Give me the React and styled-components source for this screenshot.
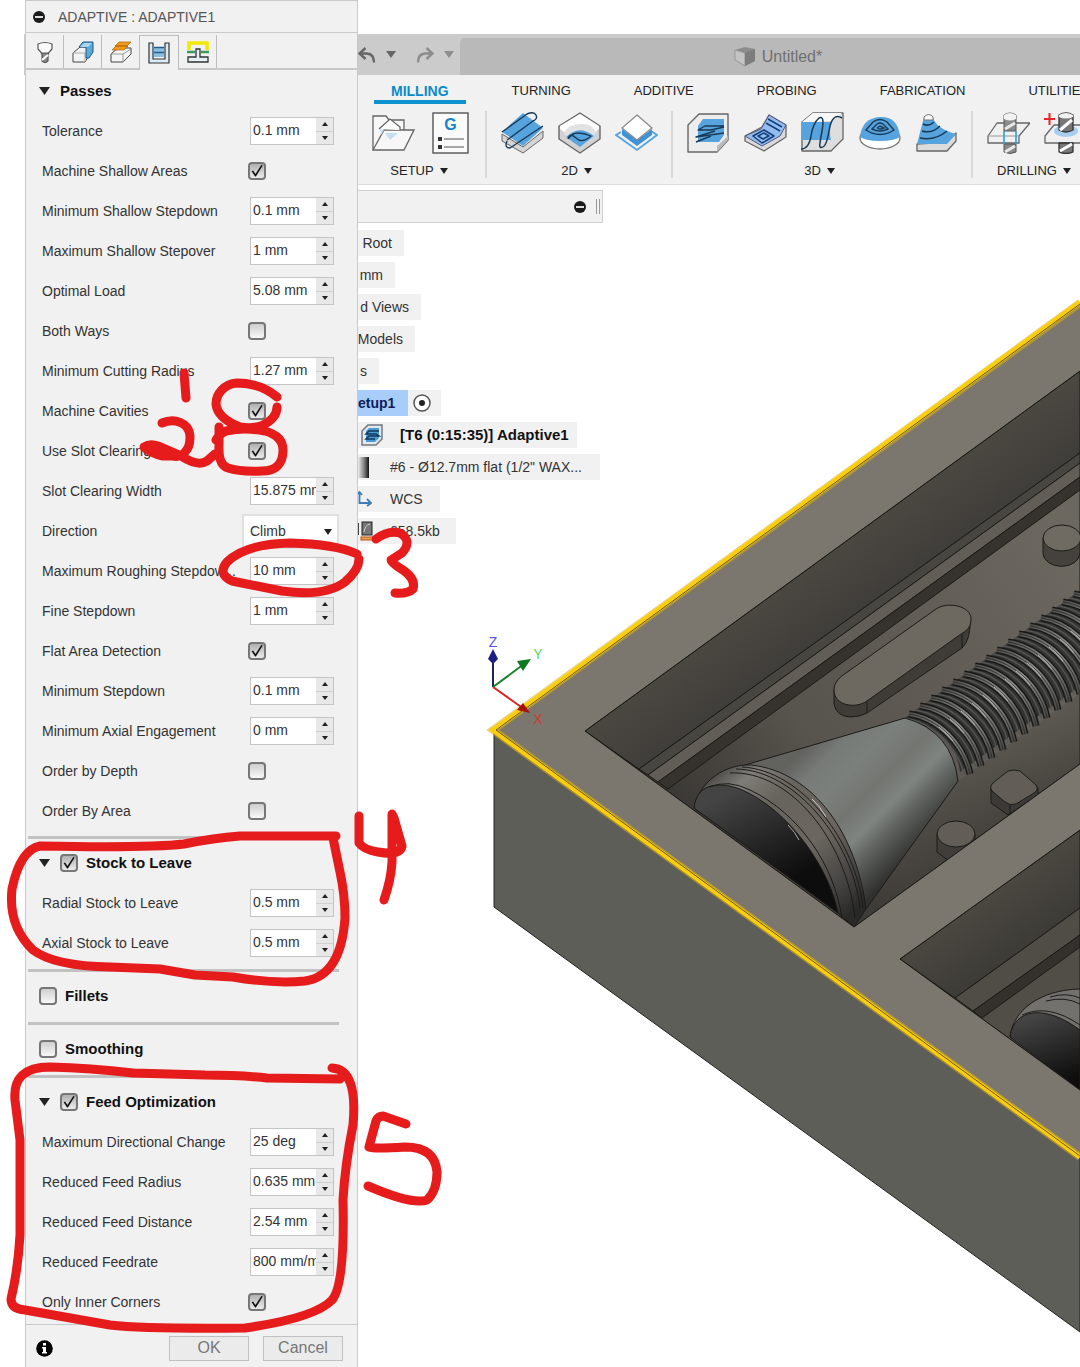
import React from "react";
import styled, { createGlobalStyle, css } from "styled-components";

const GlobalStyle = createGlobalStyle`
  * { box-sizing: border-box; }
  body {
    margin: 0;
    background: #fff;
    color: #333;
    font-family: "Liberation Sans", Arial, sans-serif;
    font-size: 14px;
    line-height: 16px;
  }
  button, input, select { font: inherit; color: inherit; }
  svg { display: block; flex: none; }
`;

/* ---------- page frame ---------- */

const Page = styled.div`
  position: relative;
  display: flex;
  min-height: 100vh;
  overflow: hidden;
`;

const WindowEdge = styled.div`
  flex: none;
  width: 1px;
  height: 41px;
  margin: 34px 0 0 24px;
  background: #cbcbcb;
`;

const Markup = styled.svg`
  position: absolute;
  top: 0;
  left: 0;
  pointer-events: none;
`;

/* ---------- settings panel ---------- */

const Panel = styled.aside`
  flex: none;
  display: flex;
  flex-direction: column;
  width: 333px;
  background: #f1f1f1;
  border: 1px solid #c9c9c9;
  border-bottom: 0;
`;

const PanelTitle = styled.header`
  display: flex;
  align-items: center;
  gap: 13px;
  height: 32px;
  padding: 0 7px;
  border-bottom: 1px solid #c9c9c9;
  color: #555;
`;

const PanelTabs = styled.nav`
  display: flex;
  align-items: flex-end;
  height: 37px;
  border-bottom: 2px solid #c8c8c8;
`;

const PanelTab = styled.button`
  display: flex;
  align-items: center;
  justify-content: center;
  width: 38px;
  height: 33px;
  padding: 0;
  border: 0;
  border-right: 1px solid #bdbdbd;
  background: transparent;
  ${(p) =>
    p.$active &&
    css`
      width: 40px;
      height: 35px;
      margin-bottom: -2px;
      border: 1px solid #bdbdbd;
      border-width: 1px 1px 0 1px;
      margin-left: -1px;
      background: #f1f1f1;
    `}
`;

const PanelBody = styled.div`
  flex: 1;
  padding: 1px 18px 1px 2px;
`;

const Section = styled.section`
  padding-bottom: 6px;
  & + & {
    border-top: 3px solid #c2c2c2;
    padding-top: 4px;
  }
  &:first-child { padding-bottom: 5px; }
  &:last-child { padding-bottom: 0; }
`;

const SectionHead = styled.div`
  display: flex;
  align-items: center;
  gap: 8px;
  height: 40px;
  padding-left: 11px;
  color: #111;
  font-size: 15px;
  font-weight: bold;
`;

const FoldButton = styled.button`
  display: flex;
  padding: 0;
  border: 0;
  margin-right: 2px;
  background: transparent;
`;

const Row = styled.div`
  display: grid;
  grid-template-columns: 200px 1fr;
  align-items: center;
  height: 40px;
  padding-left: 14px;
  & > label { white-space: nowrap; }
`;

const Check = styled.input.attrs({ type: "checkbox" })`
  appearance: none;
  flex: none;
  width: 18px;
  height: 18px;
  margin: 0 0 0 ${(p) => (p.$inRow ? "6px" : "0")};
  border: 2px solid #777;
  border-radius: 4px;
  background: linear-gradient(#cfcfcf, #f8f8f8);
  &:checked { background: linear-gradient(#b0b0b0, #ececec); }
  &:checked::after {
    content: "";
    display: block;
    width: 14px;
    height: 14px;
    background: #111;
    clip-path: polygon(12% 52%, 22% 46%, 39% 72%, 82% 6%, 90% 12%, 42% 90%, 36% 90%);
  }
`;

const SpinBox = styled.div`
  display: flex;
  width: 84px;
  height: 28px;
  margin-left: 8px;
  border: 1px solid #c4c4c4;
  background: #fff;
`;

const SpinInput = styled.input`
  width: 65px;
  padding: 0 0 2px 2px;
  border: 0;
  background: #fff;
`;

const SpinButtons = styled.div`
  display: grid;
  flex: 1;
  gap: 1px;
  background: #cfcfcf;
  & > button {
    display: flex;
    align-items: center;
    justify-content: center;
    padding: 0;
    border: 0;
    background: #e8e8e8;
  }
`;

const SelectBox = styled.div`
  position: relative;
  width: 97px;
  & > select {
    appearance: none;
    width: 100%;
    height: 35px;
    padding: 0 6px;
    border: 2px solid #e0e0e0;
    border-radius: 0;
    background: #fff;
  }
  & > svg {
    position: absolute;
    right: 7px;
    top: 15px;
    pointer-events: none;
  }
`;

const PanelFooter = styled.footer`
  display: flex;
  align-items: center;
  gap: 14px;
  height: 43px;
  padding: 5px 14px 1px 10px;
  border-top: 1px solid #c9c9c9;
`;

const InfoButton = styled.button`
  display: flex;
  margin-right: auto;
  padding: 0;
  border: 0;
  background: transparent;
`;

const FooterButton = styled.button`
  width: 80px;
  height: 25px;
  padding: 0;
  border: 1px solid #c0c0c0;
  background: #ebebeb;
  color: #777;
  font-size: 16px;
`;

/* ---------- workspace ---------- */

const Workspace = styled.div`
  flex: 1;
  min-width: 0;
  display: flex;
  flex-direction: column;
  padding-top: 34px;
`;

const TitleBar = styled.header`
  display: flex;
  height: 41px;
  padding-top: 4px;
  background: #cbcbcb;
`;

const History = styled.div`
  display: flex;
  align-items: center;
  gap: 10px;
  width: 102px;
  padding-bottom: 4px;
  & > button {
    display: flex;
    padding: 0;
    border: 0;
    background: transparent;
  }
`;

const DocumentTab = styled.div`
  display: flex;
  flex: 1;
  align-items: center;
  justify-content: center;
  gap: 6px;
  padding-left: 16px;
  border-top-left-radius: 5px;
  background: #b9b9b9;
  color: #707070;
  font-size: 16px;
`;

const Ribbon = styled.div`
  overflow: hidden;
  height: 110px;
  border-bottom: 1px solid #dcdcdc;
  background: #f1f1f1;
  white-space: nowrap;
`;

const RibbonTabs = styled.nav`
  display: flex;
  gap: 29px;
  padding-left: 16px;
`;

const RibbonTab = styled.button`
  flex: none;
  height: 29px;
  padding: 7px 17px 0;
  border: 0;
  border-bottom: 4px solid ${(p) => (p.$active ? "#0d93cf" : "transparent")};
  background: transparent;
  color: ${(p) => (p.$active ? "#0a8bc9" : "#222")};
  font-size: ${(p) => (p.$active ? "14px" : "13px")};
  font-weight: ${(p) => (p.$active ? "bold" : "normal")};
`;

const Groups = styled.div`
  display: flex;
  margin-top: 7px;
`;

const Group = styled.div`
  display: flex;
  flex: none;
  flex-direction: column;
  gap: 9px;
  height: 67px;
  padding: 0 13px 0 14px;
  border-right: 2px solid #d9d9d9;
`;

const Tools = styled.div`
  display: flex;
  gap: 14px;
  & > button {
    padding: 0;
    border: 0;
    background: transparent;
  }
`;

const GroupMenu = styled.button`
  display: flex;
  align-items: center;
  justify-content: center;
  gap: 6px;
  padding: 0 6px 0 0;
  border: 0;
  background: transparent;
  color: #222;
  font-size: 13px;
  line-height: 16px;
`;

const Viewport = styled.main`
  position: relative;
  flex: 1;
  padding-top: 5px;
`;

const Scene = styled.svg`
  position: absolute;
  inset: 0;
  width: 100%;
  height: 100%;
`;

const Browser = styled.div`
  position: relative;
`;

const BrowserHead = styled.div`
  display: flex;
  align-items: center;
  justify-content: flex-end;
  gap: 10px;
  width: 245px;
  height: 33px;
  padding-right: 2px;
  border: 1px solid #cfcfcf;
  border-left: 0;
  background: #f1f1f1;
`;

const Grip = styled.div`
  width: 4px;
  height: 15px;
  border: 1px solid #999;
  border-width: 0 1px;
`;

const Tree = styled.ul`
  display: grid;
  gap: 6px;
  margin: 7px 0 0;
  padding: 0;
  list-style: none;
`;

const Node = styled.li`
  display: flex;
  align-items: center;
  justify-content: ${(p) => (p.$clipped ? "flex-end" : "flex-start")};
  overflow: hidden;
  width: ${(p) => p.$width}px;
  height: 26px;
  padding-right: ${(p) => (p.$clipped ? "12px" : "0")};
  background: #f1f1f1;
  color: ${(p) => (p.$bold ? "#111" : "#333")};
  font-size: ${(p) => (p.$bold ? "15px" : "14px")};
  font-weight: ${(p) => (p.$bold ? "bold" : "normal")};
  white-space: nowrap;
`;

const NodeIcon = styled.span`
  flex: none;
  width: ${(p) => (p.$wide ? "42px" : "32px")};
`;

const Selected = styled.span`
  width: 50px;
  margin-right: 5px;
  background: #a9cdfb;
  color: #0b1f5c;
  font-weight: bold;
  line-height: 26px;
`;

/* ---------- small glyphs ---------- */

const Caret = ({ w = 8, h = 6, up, color = "#222" }) => (
  <svg width={w} height={h} viewBox="0 0 10 8" preserveAspectRatio="none">
    <path d={up ? "M0 8H10L5 0Z" : "M0 0H10L5 8Z"} fill={color} />
  </svg>
);

const MinusDot = ({ size = 12 }) => (
  <svg width={size} height={size} viewBox="0 0 12 12">
    <circle cx="6" cy="6" r="6" fill="#1b1b1b" />
    <rect x="2" y="5" width="8" height="2" fill="#ddd" />
  </svg>
);

const UndoIcon = ({ flip, color }) => (
  <svg width="18" height="16" viewBox="0 0 18 16" fill="none" stroke={color} strokeWidth="2.4">
    <g transform={flip ? "translate(18 0) scale(-1 1)" : undefined}>
      <path d="M7.5 1 1.5 6.5 7.5 12M2 6.5H9Q16 7 16 15.5" />
    </g>
  </svg>
);

const CubeIcon = () => (
  <svg width="22" height="21" viewBox="0 0 22 21">
    <path d="M1 4 11 1 21 3V15L11 20 1 14Z" fill="#8c8c8c" />
    <path d="M1 4 11 7V20L1 14Z" fill="#c4c4c4" stroke="#999" />
    <path d="M11 7 21 3V15L11 20Z" fill="#7d7d7d" />
  </svg>
);

const tabIcons = {
  Tool: (
    <g stroke="#555" strokeWidth="1.2" strokeLinejoin="round">
      <path d="M4 3Q11 0 18 3V8Q15 11 14 13H8Q7 11 4 8Z" fill="#fafafa" />
      <path d="M8 12H14V20L11 22 8 20Z" fill="#888" />
      <path d="M8 19 14 14" stroke="#fff" strokeWidth="2" />
    </g>
  ),
  Geometry: (
    <g strokeLinejoin="round">
      <path d="M1 12 8 6H15V13H18L13 21H1Z" fill="#f3f3f3" stroke="#444" />
      <path d="M1 12H13V21" stroke="#aaa" fill="none" />
      <path d="M7 6 11 1H21V11L17 17H14V6Z" fill="#5ea9dc" stroke="#1d5580" />
      <path d="M8 6 12 2H20L16 6Z" fill="#a9d6f2" />
    </g>
  ),
  Heights: (
    <g strokeLinejoin="round">
      <path d="M1 13 8 7H21V13L13 21H1Z" fill="#f5f5f5" stroke="#444" />
      <path d="M1 13H13V21M13 13 21 8" stroke="#999" fill="none" />
      <path d="M2 9 6 5H18L14 9ZM5 5 9 1H21L17 5Z" fill="#f39a1d" stroke="#a8640a" strokeWidth=".7" />
    </g>
  ),
  Passes: (
    <g>
      <path d="M1 1H5V17H17V1H21V21H1Z" fill="#dcebf5" stroke="#333" strokeWidth="1.2" />
      <path d="M6 5H16V15H6Z" fill="#8bbde0" />
      <path d="M6 5.5H16M6 10.5H16" stroke="#235f91" strokeWidth="1.5" />
    </g>
  ),
  Linking: (
    <g>
      <path d="M2 9V2H20V9" fill="none" stroke="#f3e800" strokeWidth="3.6" />
      <path d="M0 11H8M14 11H22" stroke="#3a9b5b" strokeWidth="2.5" />
      <path d="M1 16H9V8H13V16H21V21H1Z" fill="#e5f0f4" stroke="#333" strokeWidth="1.3" />
    </g>
  ),
};

/* ---------- ribbon icons, drawn on a 43 x 43 grid ---------- */

const B = "#56a3de";
const D = "#173a56";
const G = "#666";

const ribbonIcons = {
  "New Setup": (
    <g fill="none" stroke="#666" strokeWidth="1.3">
      <path d="M1 39V5H14L17 9H32V19M1 39 12 19H42L32 39Z" fill="#f7f7f7" />
      <path d="M7 18 18 8 28 16V19" fill="#fff" />
      <path d="M8 18 12 19 9 24ZM13 22H26L18 29Z" fill="#c5dff2" stroke="none" />
    </g>
  ),
  "NC Program": (
    <g>
      <rect x="4" y="2" width="35" height="40" fill="#fafafa" stroke="#555" strokeWidth="1.4" />
      <path d="M9 26h4v4H9zM9 34h4v4H9z" fill="#333" />
      <path d="M15 28H35M15 36H35" stroke="#555" />
      <text x="21.500" y="19" textAnchor="middle" fontSize="16" fontWeight="bold" fill="#1583cf">G</text>
    </g>
  ),
  "2D Adaptive": (
    <g strokeLinejoin="round">
      <path d="M1 23 22 36 42 20V27L22 42 1 30Z" fill="#d5d5d5" stroke={G} />
      <path d="M1 21 22 2 42 17 22 35Z" fill={B} />
      <path d="M1 21 26 3Q33 0 35 4T32 10L6 29M6 30Q3 37 9 37L42 15" fill="none" stroke={D} strokeWidth="1.4" />
    </g>
  ),
  "2D Pocket": (
    <g strokeLinejoin="round">
      <path d="M22 2 42 15V28L22 42 1 28V15Z" fill="#d2d2d2" stroke={G} strokeWidth="1.4" />
      <path d="M22 3 41 15 41 18 22 32 2 18V15Z" fill="#fff" />
      <path d="M6 23Q8 14 22 13T38 23L22 35Z" fill="#e2e2e2" />
      <path d="M8 26Q21 13 36 25L22 36Z" fill={B} />
      <path d="M10 28Q14 22 20 22T33 25Q24 33 18 27T10 28" fill="none" stroke={D} strokeWidth="1.3" />
    </g>
  ),
  "2D Contour": (
    <g>
      <path d="M6 21 1 24 22 39 42 24 36 20" fill="none" stroke={B} strokeWidth="1.8" />
      <path d="M7 18V24L22 35 37 24V18L22 29Z" fill="#3e93d6" />
      <path d="M22 4 37 17 22 29 7 17Z" fill="#fff" stroke="#888" strokeWidth="1.2" />
    </g>
  ),
  "Adaptive Clearing": (
    <g strokeLinejoin="round">
      <path d="M1 14 12 3H41V29L30 41H1Z" fill="#ededed" stroke={G} strokeWidth="1.4" />
      <path d="M30 41V35L41 25V29Z" fill="#bbb" />
      <path d="M11 15 16 8H37V24L32 31H11Z" fill={B} />
      <path d="M37 15H18L11 19H24L37 16M37 22 9 26 28 20M9 31 24 25" fill="none" stroke={D} strokeWidth="1.4" />
    </g>
  ),
  "Pocket Clearing": (
    <g strokeLinejoin="round">
      <path d="M1 25 18 16 25 4 42 14V26L20 40 1 30Z" fill="#dadada" stroke={G} strokeWidth="1.3" />
      <path d="M1 25 17 18 25 4 42 14 36 25 18 35Z" fill="#91bdf0" stroke="#557" />
      <path d="M24 8 38 16M22 12 36 20M9 25 20 19 30 25 18 32ZM14 25 20 22 25 25 19 28Z" fill="none" stroke="#153e7a" strokeWidth="1.5" />
    </g>
  ),
  Parallel: (
    <g strokeLinejoin="round">
      <path d="M1 40V11L12 2H42V28L30 40Z" fill="#dedede" stroke={G} strokeWidth="1.3" />
      <path d="M1 11 12 2H41L30 10Z" fill="#f7f7f7" />
      <path d="M1 11H30Q28 22 30 29H1Z" fill={B} />
      <path d="M0 38Q8 38 10 25T18 7Q24 4 21 20T19 36Q25 39 28 20T41 7" fill="none" stroke={D} strokeWidth="1.5" />
    </g>
  ),
  Spiral: (
    <g>
      <ellipse cx="22" cy="27" rx="20" ry="11" fill="#fff" stroke="#777" strokeWidth="1.3" />
      <path d="M2 26Q4 7 22 6T42 26Q36 30 22 30T2 26" fill={B} />
      <path d="M8 19 15 11Q22 6 29 11L36 19Q22 28 8 19ZM14 18 19 13Q22 11 25 13L30 18Q22 22 14 18ZM19 17 22 15 26 17Q22 19 19 17" fill="none" stroke={D} strokeWidth="1.4" />
    </g>
  ),
  Scallop: (
    <g strokeLinejoin="round">
      <path d="M2 33 32 31 41 22V30L32 40H2Z" fill="#dcdcdc" stroke={G} strokeWidth="1.3" />
      <path d="M2 33 9 6Q14 1 18 6 20 17 41 23L32 33Z" fill={B} />
      <path d="M9 6Q14 1 18 6V9H9Z" fill="#f7f7f7" stroke="#777" />
      <path d="M8 13Q14 16 19 11M7 20Q17 23 25 15M5 27Q20 30 32 20" fill="none" stroke={D} strokeWidth="1.5" />
    </g>
  ),
  Drill: (
    <g strokeLinejoin="round">
      <path d="M1 25 10 12H43L32 25V32H1Z" fill="#f0f0f0" stroke={G} strokeWidth="1.3" />
      <path d="M1 25H32" stroke="#999" />
      <path d="M17 4Q23 0 29 4V20H17ZM17 33H29V41Q23 44 17 41Z" fill="#8a8a8a" stroke="#555" />
      <path d="M17 4Q23 0 29 4V8Q23 11 17 8Z" fill="#f2f2f2" />
      <path d="M18 18 28 12M18 41 28 35" stroke="#e7e7e7" strokeWidth="3" />
      <path d="M17 20V33M29 20V33" stroke="#2f9de2" strokeWidth="1.6" />
    </g>
  ),
  "Hole Recognition": (
    <g strokeLinejoin="round">
      <path d="M1 25 10 14H43V25L36 32H1Z" fill="#f0f0f0" stroke={G} strokeWidth="1.3" />
      <ellipse cx="22" cy="20" rx="12" ry="6" fill="#a9cdf0" />
      <path d="M15 4Q22 0 29 4V19Q22 23 15 19ZM15 32H29V41Q22 44 15 41Z" fill="#777" stroke="#333" strokeWidth="1.3" />
      <path d="M16 19 28 9M16 40 28 33" stroke="#fff" strokeWidth="3" />
      <path d="M15 4Q22 0 29 4V6Q22 9 15 6Z" fill="#f2f2f2" />
      <path d="M0 8H11M5.500 2V14" stroke="#e8232a" strokeWidth="2" />
    </g>
  ),
};

const groups = [
  { name: "SETUP", tools: ["New Setup", "NC Program"] },
  { name: "2D", tools: ["2D Adaptive", "2D Pocket", "2D Contour"] },
  { name: "3D", tools: ["Adaptive Clearing", "Pocket Clearing", "Parallel", "Spiral", "Scallop"] },
  { name: "DRILLING", tools: ["Drill", "Hole Recognition"] },
];

/* ---------- form data ---------- */

const sections = [
  {
    title: "Passes",
    open: true,
    rows: [
      ["Tolerance", "0.1 mm"],
      ["Machine Shallow Areas", true],
      ["Minimum Shallow Stepdown", "0.1 mm"],
      ["Maximum Shallow Stepover", "1 mm"],
      ["Optimal Load", "5.08 mm"],
      ["Both Ways", false],
      ["Minimum Cutting Radius", "1.27 mm"],
      ["Machine Cavities", true],
      ["Use Slot Clearing", true],
      ["Slot Clearing Width", "15.875 mm"],
      ["Direction", ["Climb", "Conventional"]],
      ["Maximum Roughing Stepdow...", "10 mm"],
      ["Fine Stepdown", "1 mm"],
      ["Flat Area Detection", true],
      ["Minimum Stepdown", "0.1 mm"],
      ["Minimum Axial Engagement", "0 mm"],
      ["Order by Depth", false],
      ["Order By Area", false],
    ],
  },
  {
    title: "Stock to Leave",
    open: true,
    checked: true,
    rows: [
      ["Radial Stock to Leave", "0.5 mm"],
      ["Axial Stock to Leave", "0.5 mm"],
    ],
  },
  { title: "Fillets", checked: false, rows: [] },
  { title: "Smoothing", checked: false, rows: [] },
  {
    title: "Feed Optimization",
    open: true,
    checked: true,
    rows: [
      ["Maximum Directional Change", "25 deg"],
      ["Reduced Feed Radius", "0.635 mm"],
      ["Reduced Feed Distance", "2.54 mm"],
      ["Reduced Feedrate", "800 mm/min"],
      ["Only Inner Corners", true],
    ],
  },
];

const toId = (text) => text.toLowerCase().replace(/[^a-z]+/g, "-");

function Field({ label, value }) {
  const id = toId(label);
  let control;
  if (typeof value === "boolean") {
    control = <Check id={id} $inRow defaultChecked={value} />;
  } else if (Array.isArray(value)) {
    control = (
      <SelectBox>
        <select id={id}>
          {value.map((v) => (
            <option key={v}>{v}</option>
          ))}
        </select>
        <Caret />
      </SelectBox>
    );
  } else {
    control = (
      <SpinBox>
        <SpinInput id={id} type="text" defaultValue={value} />
        <SpinButtons>
          <button aria-label={`Increase ${label}`}><Caret w={6} h={4} up /></button>
          <button aria-label={`Decrease ${label}`}><Caret w={6} h={4} /></button>
        </SpinButtons>
      </SpinBox>
    );
  }
  return (
    <Row>
      <label htmlFor={id}>{label}</label>
      {control}
    </Row>
  );
}

function SettingsPanel() {
  return (
    <Panel>
      <PanelTitle>
        <MinusDot />
        <span>ADAPTIVE : ADAPTIVE1</span>
      </PanelTitle>
      <PanelTabs>
        {Object.entries(tabIcons).map(([name, icon]) => (
          <PanelTab key={name} $active={name === "Passes"} aria-label={name}>
            <svg width="22" height="22" viewBox="0 0 22 22">{icon}</svg>
          </PanelTab>
        ))}
      </PanelTabs>
      <PanelBody>
        {sections.map((s) => (
          <Section key={s.title}>
            <SectionHead>
              {s.open && (
                <FoldButton aria-label={`Collapse ${s.title}`}>
                  <Caret w={11} h={8} />
                </FoldButton>
              )}
              {s.checked !== undefined && <Check id={toId(s.title)} defaultChecked={s.checked} />}
              {s.checked === undefined ? <span>{s.title}</span> : <label htmlFor={toId(s.title)}>{s.title}</label>}
            </SectionHead>
            {s.rows.map(([label, value]) => (
              <Field key={label} label={label} value={value} />
            ))}
          </Section>
        ))}
      </PanelBody>
      <PanelFooter>
        <InfoButton aria-label="Information">
          <svg width="17" height="17" viewBox="0 0 17 17">
            <circle cx="8.500" cy="8.500" r="8.300" fill="#000" />
            <path d="M7 3h3v2.500H7zM6 7h4v5h1v1.500H6V12h1V8.500H6z" fill="#fff" />
          </svg>
        </InfoButton>
        <FooterButton>OK</FooterButton>
        <FooterButton>Cancel</FooterButton>
      </PanelFooter>
    </Panel>
  );
}

/* ---------- 3D scene ---------- */

const rings = Array.from({ length: 18 }, (_, i) => 17 - i);

function MouldScene() {
  return (
    <Scene viewBox="358 185 722 1182" preserveAspectRatio="xMinYMin slice" aria-label="Mould model">
      <defs>
        <linearGradient id="wall" gradientUnits="userSpaceOnUse" x1="760" y1="600" x2="830" y2="697">
          <stop offset="0" stopColor="#4b4842" />
          <stop offset=".55" stopColor="#403e3a" />
          <stop offset="1" stopColor="#2c2b28" />
        </linearGradient>
        <linearGradient id="floor" gradientUnits="userSpaceOnUse" x1="700" y1="830" x2="1080" y2="560">
          <stop offset="0" stopColor="#3b3935" />
          <stop offset=".3" stopColor="#57534d" />
          <stop offset="1" stopColor="#6c675f" />
        </linearGradient>
        <linearGradient id="floorShade" gradientUnits="userSpaceOnUse" x1="905" y1="775" x2="955" y2="850">
          <stop offset="0" stopColor="#2b2a27" stopOpacity="0" />
          <stop offset="1" stopColor="#2b2a27" stopOpacity=".45" />
        </linearGradient>
        <linearGradient id="cone" gradientUnits="userSpaceOnUse" x1="815" y1="738" x2="922" y2="846">
          <stop offset="0" stopColor="#62625e" />
          <stop offset=".15" stopColor="#777b78" />
          <stop offset=".32" stopColor="#7b807c" />
          <stop offset=".5" stopColor="#737570" />
          <stop offset=".66" stopColor="#7e8480" />
          <stop offset=".8" stopColor="#5b5e5b" />
          <stop offset="1" stopColor="#30302f" />
        </linearGradient>
        <linearGradient id="rim" gradientUnits="userSpaceOnUse" x1="720" y1="770" x2="850" y2="915">
          <stop offset="0" stopColor="#4d4c49" />
          <stop offset=".12" stopColor="#7f7d78" />
          <stop offset=".3" stopColor="#67635d" />
          <stop offset=".6" stopColor="#6b665f" />
          <stop offset=".85" stopColor="#444341" />
          <stop offset="1" stopColor="#292928" />
        </linearGradient>
        <linearGradient id="disc" gradientUnits="userSpaceOnUse" x1="740" y1="787" x2="790" y2="880">
          <stop offset="0" stopColor="#444" />
          <stop offset="1" stopColor="#0d0d0d" />
        </linearGradient>
        <linearGradient id="disc2" gradientUnits="userSpaceOnUse" x1="1045" y1="1012" x2="1070" y2="1080">
          <stop offset="0" stopColor="#444" />
          <stop offset="1" stopColor="#0d0d0d" />
        </linearGradient>
        <linearGradient id="wall2" gradientUnits="userSpaceOnUse" x1="980" y1="905" x2="1030" y2="975">
          <stop offset="0" stopColor="#4a4741" />
          <stop offset="1" stopColor="#373632" />
        </linearGradient>
        <linearGradient id="fin" x1="0" y1="0" x2="1" y2="1">
          <stop offset="0" stopColor="#50504e" />
          <stop offset=".45" stopColor="#8b8c89" />
          <stop offset=".75" stopColor="#6c6d6a" />
          <stop offset="1" stopColor="#484846" />
        </linearGradient>
        <clipPath id="pocketA"><path d="M585 731 1080 371V764L854 927Z" /></clipPath>
        <clipPath id="pocketB"><path d="M900 959 1080 830V1090Z" /></clipPath>
      </defs>

      {/* block */}
      <path d="M493 730 1080 303V1157Z" fill="#7b766e" />
      <path d="M494 731 1080 1157V1332L494 907Z" fill="#5e5e59" stroke="#222" />

      {/* first pocket */}
      <g clipPath="url(#pocketA)" stroke="#1c1b19" strokeWidth="1">
        <path d="M585 731 1080 371V764L854 927Z" fill="url(#floor)" />
        <path d="M866 907 958 781 1080 693V764L854 927Z" fill="url(#floorShade)" stroke="none" />
        <path d="M585 731 1080 371V453L639 769Z" fill="url(#wall)" />
        <path d="M639 769 1080 453V463L648 775Z" fill="#484641" />
        <path d="M648 775 1080 463V477L658 782Z" fill="#625e57" />
        <path d="M658 782 1080 477V490L668 789Z" fill="#36322e" />

        <path d="M834 690V704Q836 716 850 717 860 717 867 713L962 648Q971 640 970 618Z" fill="#3f3c38" />
        <path d="M834 690C834 682 840 677 846 673L936 609C948 601 971 606 971 619 971 628 966 631 961 634L867 701C856 709 834 706 834 690Z" fill="#6d6860" />
        <path d="M867 702V713M962 634V648" />

        <path d="M1043 538V553A18 13 0 0 0 1080 553V538Z" fill="#45423e" />
        <ellipse cx="1062" cy="538" rx="19" ry="13" fill="#6f6a62" />

        <path d="M991 788V803L1008 815 1038 795V788Z" fill="#3c3a36" />
        <path d="M993 783 1008 771Q1014 769 1020 771L1036 785Q1039 790 1034 793L1016 804Q1010 806 1005 802L992 791Q989 787 993 783Z" fill="#625e57" />
        <path d="M1010 805V815" />
        <path d="M937 834V852L950 862 975 846V834Z" fill="#403e3a" />
        <ellipse cx="956" cy="834" rx="19" ry="13" fill="#625e57" />

        {/* threaded shaft */}
        <path d="M905 718 1100 576V672L960 772Q955 730 905 718Z" fill="#343432" stroke="none" />
        {rings.map((i) => (
          <g key={i} transform={`translate(${i * 11} ${i * -8})`} fill="none">
            <path d="M909 714C938 718 964 744 970 774" stroke="#181817" strokeWidth="7" />
            <path d="M909 714C938 718 964 744 970 774" stroke="url(#fin)" strokeWidth="4" />
            <path d="M909 714C938 718 964 744 970 774" stroke="#262625" strokeWidth=".8" />
            <path d="M904 718C932 722 958 748 964 774" stroke="#545452" strokeWidth="1.500" />
            <path d="M939 727Q947 733 953 741" stroke="#b5b5b1" strokeWidth="1" />
          </g>
        ))}

        {/* horn */}
        <path d="M745 765 905 718Q952 731 958 781L866 909 835 860Z" fill="url(#cone)" />
        <path d="M694 808C700 780 726 764 751 765 815 772 857 836 866 909L854 927 838 913Z" fill="url(#rim)" />
        <path d="M694 808C697 780 724 783 740 789 790 810 830 870 838 913Z" fill="url(#disc)" />
        <g fill="none">
          <path d="M710 787Q728 779 750 790C800 814 834 865 842 918" />
          <path d="M730 773C790 770 846 840 855 918" />
          <path d="M736 769C796 770 853 842 860 908" />
          <path d="M742 767C802 770 856 842 863 908" />
          <path d="M812 799Q820 806 826 817" stroke="#ccc" />
          <path d="M788 825Q795 832 799 840" stroke="#aaa" />
        </g>
      </g>
      <path d="M1080 371 585 731 854 927 1080 764" fill="none" stroke="#1c1b19" />

      {/* second pocket */}
      <g clipPath="url(#pocketB)" stroke="#1c1b19">
        <path d="M900 959 1080 830V1090Z" fill="#514e48" />
        <path d="M900 959 1080 830V908L955 998Z" fill="url(#wall2)" />
        <path d="M955 998 1080 908V935L973 1011Z" fill="#504d47" />
        <path d="M973 1011 1080 935V947L982 1018Z" fill="#34312d" />
        <path d="M1010 1037C1013 1010 1040 990 1080 989V1045Z" fill="#73716d" />
        <path d="M1010 1037C1014 1008 1045 1004 1080 1030V1090Z" fill="url(#disc2)" />
        <path d="M1022 1015Q1048 1003 1080 1025M1046 1001Q1065 996 1080 1004M1050 997Q1066 992 1080 998" fill="none" />
      </g>
      <path d="M1080 830 900 959 1080 1090" fill="none" stroke="#1c1b19" />

      {/* highlighted stock outline */}
      <path d="M1080 303 493 730 1080 1157" fill="none" stroke="#d8b11d" strokeWidth="8" opacity=".55" />
      <path d="M1080 302 493 730 1080 1157" fill="none" stroke="#fbce0b" strokeWidth="5" />
      <path d="M1080 304 496 730 1080 1156" fill="none" stroke="#6a5510" strokeWidth="1" />

      {/* axis triad */}
      <g strokeWidth="2" fontSize="14" textAnchor="middle">
        <path d="M493 687V655" stroke="#22264f" />
        <path d="M488 659 493 649 498 659 493 664Z" fill="#1c1f80" />
        <path d="M493 687 524 664" stroke="#16802a" />
        <path d="M517 661 531 659 523 671Z" fill="#0c7a20" />
        <path d="M493 687 524 709" stroke="#d92323" />
        <path d="M523 703 530 713 517 710Z" fill="#a51212" />
        <text x="493" y="647" fill="#5555e0">Z</text>
        <text x="538" y="659" fill="#4fdc55">Y</text>
        <text x="538" y="724" fill="#d8362f">X</text>
      </g>
    </Scene>
  );
}

/* ---------- browser tree ---------- */

function BrowserTree() {
  return (
    <Browser>
      <BrowserHead>
        <MinusDot />
        <Grip />
      </BrowserHead>
      <Tree>
        <Node $clipped $width={46}>Root</Node>
        <Node $clipped $width={37}>mm</Node>
        <Node $clipped $width={63}>d Views</Node>
        <Node $clipped $width={57}>Models</Node>
        <Node $clipped $width={21}>s</Node>
        <Node $width={83}>
          <Selected>etup1</Selected>
          <svg width="18" height="18" viewBox="0 0 18 18">
            <circle cx="9" cy="9" r="8" fill="#fff" stroke="#555" strokeWidth="1.500" />
            <circle cx="9" cy="9" r="3" fill="#222" />
          </svg>
        </Node>
        <Node $bold $width={219}>
          <NodeIcon $wide>
            <svg width="25" height="22" viewBox="-3 0 25 22">
              <path d="M1 7 7 1H21V15L15 21H1Z" fill="#e4e9ed" stroke="#6f7a84" strokeWidth="1.500" />
              <path d="M5 7 8 4H18V14L14 18H5Z" fill="#4a9bd6" />
              <path d="M18 7H8L5 10H15L18 12H8L5 15H14" fill="none" stroke="#123a5a" strokeWidth="1.500" />
            </svg>
          </NodeIcon>
          [T6 (0:15:35)] Adaptive1
        </Node>
        <Node $width={242}>
          <NodeIcon>
            <svg width="11" height="21" viewBox="0 0 11 21">
              <defs>
                <linearGradient id="mill">
                  <stop offset="0" stopColor="#eee" />
                  <stop offset=".6" stopColor="#777" />
                  <stop offset="1" stopColor="#111" />
                </linearGradient>
              </defs>
              <rect width="11" height="21" fill="url(#mill)" />
            </svg>
          </NodeIcon>
          #6 - Ø12.7mm flat (1/2" WAX...
        </Node>
        <Node $width={82}>
          <NodeIcon>
            <svg width="14" height="16" viewBox="0 0 14 16" fill="none" stroke="#3a7fb8" strokeWidth="1.800">
              <path d="M1.500 1V12H12M0 3 1.500 1 4 4M9 8 13 12 9 15" />
            </svg>
          </NodeIcon>
          WCS
        </Node>
        <Node $width={98}>
          <NodeIcon>
            <svg width="16" height="20" viewBox="0 0 16 20">
              <path d="M.5 2V14" stroke="#444" />
              <rect x="4" y="1" width="10" height="13" fill="#777" stroke="#222" />
              <path d="M6 11Q7 4 12 3" stroke="#ccc" fill="none" />
              <rect x="3" y="16" width="12" height="3" fill="#f0a050" stroke="#b6561c" />
            </svg>
          </NodeIcon>
          658.5kb
        </Node>
      </Tree>
    </Browser>
  );
}

/* ---------- red pen marks ---------- */

const strokes = [
  "M184 373 186 398",
  "M162 423C174 418 189 422 190 436 190 446 188 450 181 456L163 456Q150 453 144 447 150 443 158 446L181 456Q198 467 207 461L215 454",
  "M277 397C264 386 250 383 237 383 224 384 216 394 216 404 217 414 227 422 240 427Q254 429 263 425 277 418 277 407",
  "M219 427V445Q218 465 228 468 240 472 262 471 283 471 283 450 283 436 265 431 245 427 226 431 219 434 216 440",
  "M357 554Q335 544 290 543 245 544 227 562 217 574 232 581L282 591Q325 597 345 582 359 570 359 559",
  "M376 539Q388 530 400 533 413 541 402 553L391 560Q391 563 403 570 416 579 413 589 408 594 395 593",
  "M359 816V843Q364 850 378 852 400 856 402 846L394 818 392 814V862Q391 880 384 900",
  "M336 836H240Q214 838 184 844 150 848 40 846 20 850 12 889 8 926 33 950 54 966 110 967L160 969 195 975 233 977Q273 984 305 981 341 976 345 918 345 895 340 872L333 838",
  "M340 1079 267 1078Q240 1075 205 1075L133 1073Q90 1068 50 1067 12 1067 15 1100L20 1140V1235Q18 1270 11 1299 11 1309 25 1310L110 1325Q145 1329 245 1328 315 1318 332 1300 345 1285 343 1200 345 1165 353 1125 358 1069 332 1068",
  "M406 1124 383 1116Q378 1116 376 1121L369 1147Q374 1149 405 1147 435 1147 437 1172 437 1191 427 1200 412 1205 368 1186",
];

function PenMarks() {
  return (
    <Markup width="460" height="1367" viewBox="0 0 460 1367" fill="none" stroke="#e61b1c" strokeWidth="9" strokeLinecap="round" strokeLinejoin="round" aria-hidden="true">
      {strokes.map((d) => (
        <path key={d} d={d} />
      ))}
      <path d="M148 449 176 456" strokeWidth="10" />
    </Markup>
  );
}

export default function App() {
  const tabs = ["MILLING", "TURNING", "ADDITIVE", "PROBING", "FABRICATION", "UTILITIES"];
  return (
    <Page>
      <GlobalStyle />
      <WindowEdge />
      <SettingsPanel />
      <Workspace>
        <TitleBar>
          <History>
            <button aria-label="Undo"><UndoIcon color="#666" /></button>
            <button aria-label="Undo history"><Caret w={10} h={7} color="#666" /></button>
            <span />
            <button aria-label="Redo"><UndoIcon flip color="#8d8d8d" /></button>
            <button aria-label="Redo history"><Caret w={10} h={7} color="#8d8d8d" /></button>
          </History>
          <DocumentTab>
            <CubeIcon />
            <span>Untitled*</span>
          </DocumentTab>
        </TitleBar>
        <Ribbon>
          <RibbonTabs>
            {tabs.map((t) => (
              <RibbonTab key={t} $active={t === "MILLING"}>{t}</RibbonTab>
            ))}
          </RibbonTabs>
          <Groups>
            {groups.map((g) => (
              <Group key={g.name}>
                <Tools>
                  {g.tools.map((t) => (
                    <button key={t} aria-label={t}>
                      <svg width="43" height="43" viewBox="0 0 43 43">{ribbonIcons[t]}</svg>
                    </button>
                  ))}
                </Tools>
                <GroupMenu>
                  {g.name}
                  <Caret />
                </GroupMenu>
              </Group>
            ))}
          </Groups>
        </Ribbon>
        <Viewport>
          <MouldScene />
          <BrowserTree />
        </Viewport>
      </Workspace>
      <PenMarks />
    </Page>
  );
}
